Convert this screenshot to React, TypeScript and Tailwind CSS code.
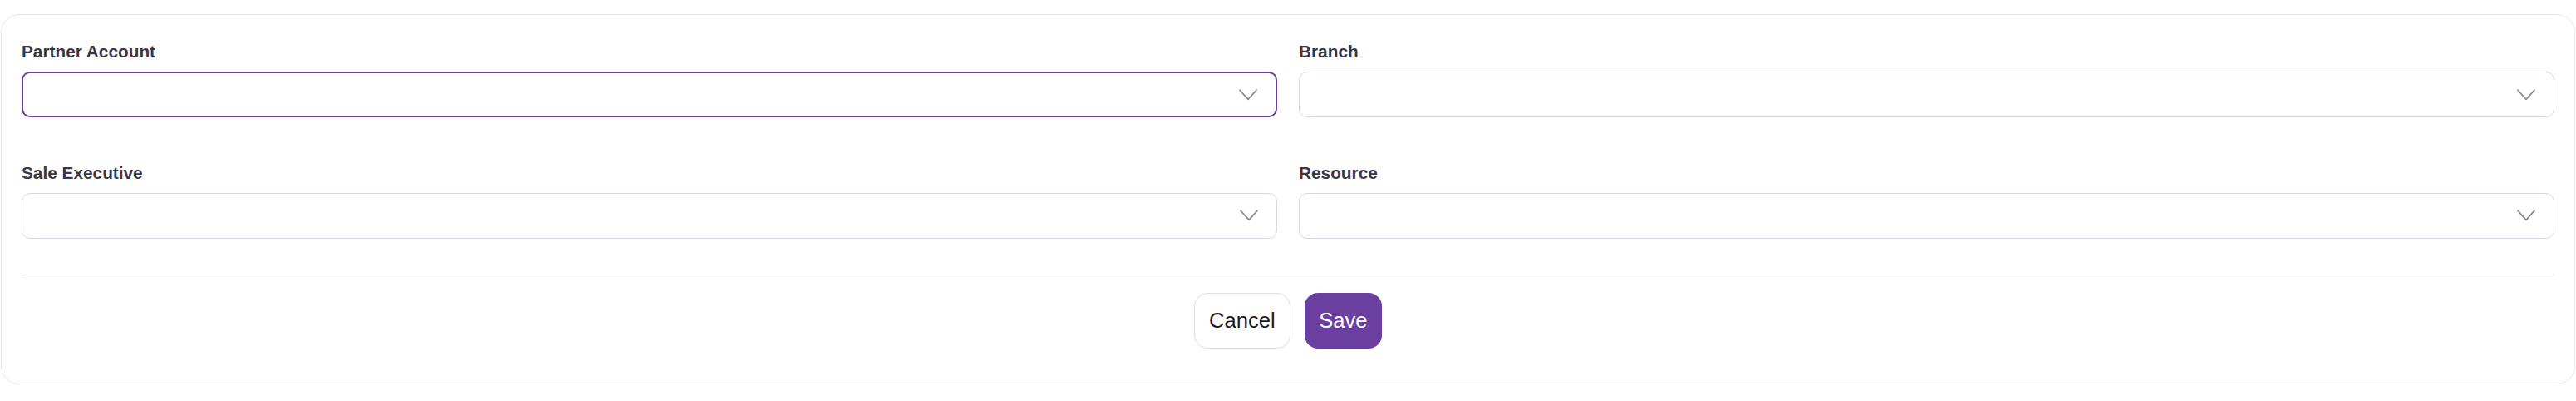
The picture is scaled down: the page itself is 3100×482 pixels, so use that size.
import type { ReactNode } from "react";

type Field = {
  id: string;
  label: string;
  focused?: boolean;
};

const fields: Field[] = [
  { id: "partner", label: "Partner Account", focused: true },
  { id: "branch", label: "Branch" },
  { id: "sale", label: "Sale Executive" },
  { id: "resource", label: "Resource" },
];

function Chevron() {
  return (
    <svg
      width="22"
      height="14"
      viewBox="0 0 22 14"
      fill="none"
      className="shrink-0"
      aria-hidden="true"
    >
      <polyline
        points="1,1.2 11,12.4 21,1.2"
        stroke="#8a8594"
        strokeWidth="1.7"
        strokeLinecap="round"
        strokeLinejoin="round"
      />
    </svg>
  );
}

function SelectField({ field }: { field: Field }) {
  const boxClass = field.focused
    ? "flex h-[55px] w-full items-center justify-end rounded-[10px] border-2 border-[#6a3fa0] bg-white pr-[22px]"
    : "flex h-[55px] w-full items-center justify-end rounded-[10px] border-[1.5px] border-[#d9d6e1] bg-white pr-[22.5px]";

  return (
    <div className="flex flex-col">
      <label
        htmlFor={field.id}
        className="mb-[10px] text-[20.8px] leading-[28px] font-semibold text-[#3b3646]"
      >
        {field.label}
      </label>
      <button type="button" id={field.id} className={boxClass}>
        <Chevron />
      </button>
    </div>
  );
}

function Actions({ children }: { children: ReactNode }) {
  return (
    <div className="mt-[21px] flex items-center justify-center gap-[17px]">
      {children}
    </div>
  );
}

export default function App() {
  return (
    <div
      className="min-h-[482px] bg-white px-px pt-[17px]"
      style={{ fontFamily: '"Liberation Sans", Arial, sans-serif' }}
    >
      <div className="rounded-[22px] border-[1.5px] border-[#e6e4ec] bg-white px-[24px] pt-[30px] pb-[42px]">
        <div className="grid grid-cols-2 gap-x-[26px] gap-y-[52.5px]">
          {fields.map((f) => (
            <SelectField key={f.id} field={f} />
          ))}
        </div>

        <div className="mt-[43.5px] h-px w-full bg-[#dfdce6]" />

        <Actions>
          <button
            type="button"
            className="h-[67px] rounded-[16px] border-[1.5px] border-[#dedbe7] bg-white px-[17px] text-[25.6px] text-[#1c1b1f]"
          >
            Cancel
          </button>
          <button
            type="button"
            className="h-[67px] rounded-[16px] bg-[#6b3fa0] px-[17.5px] text-[25.6px] text-white"
          >
            Save
          </button>
        </Actions>
      </div>
    </div>
  );
}
